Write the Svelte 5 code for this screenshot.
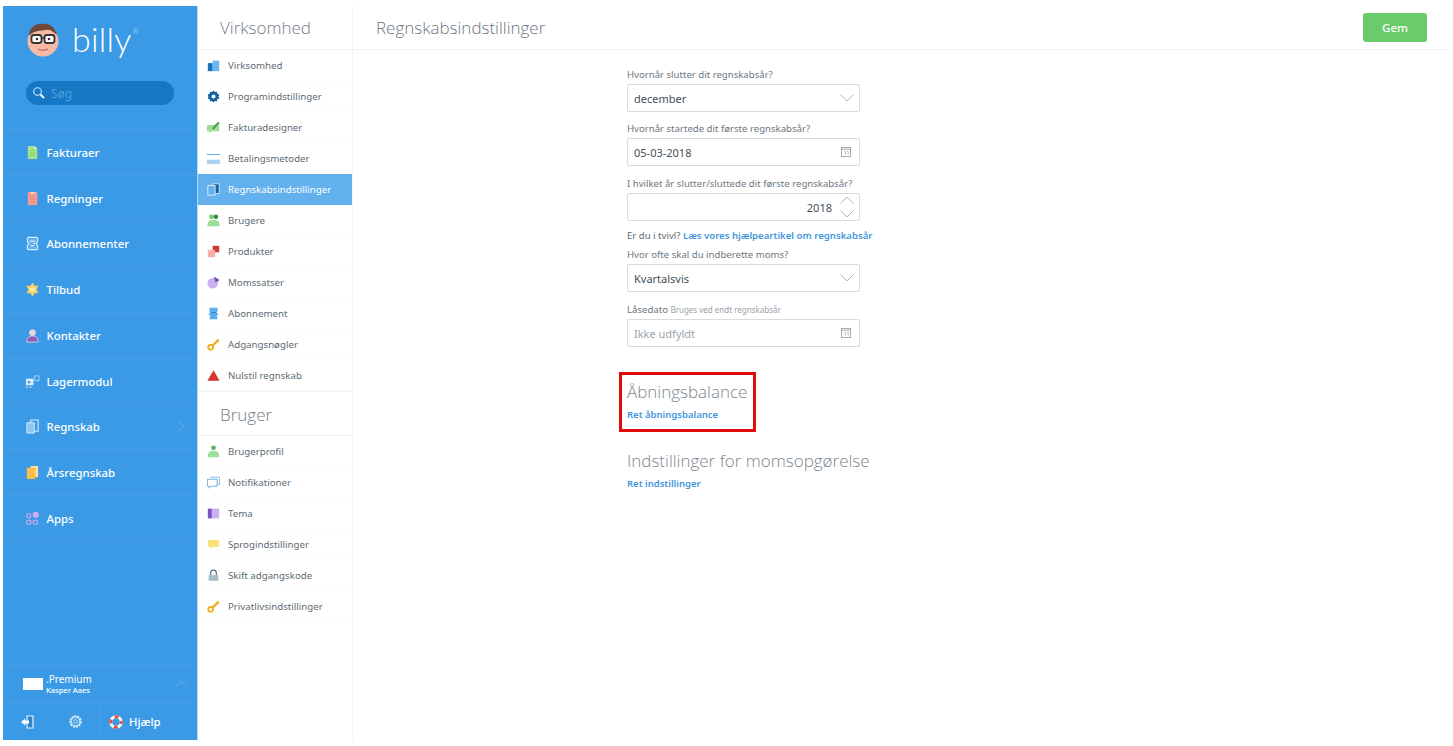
<script>
  const icons = {
    faktura: '<path d="M3 1h7l3 3v11H3z" fill="#a4e28c"/><path d="M10 1l3 3h-3z" fill="#e6f8dc"/><path d="M5 6h6M5 8.500h6M5 11h6" stroke="#86cf6c"/>',
    regning: '<path d="M3 1h10v14H3z" fill="#f59c90"/><path d="M6 1h4v2H6z" fill="#fbd5cf"/><path d="M5 6h6M5 9h6M5 12h6" stroke="#ec8376"/>',
    abon: '<path d="M3.500 1.500h9a1 1 0 011 1V6l-1.500 2 1.500 2v3.500a1 1 0 01-1 1h-9a1 1 0 01-1-1V10L4 8 2.500 6V2.500a1 1 0 011-1z" fill="#5fade9" stroke="#d9eefc" stroke-width="1.200"/><path d="M5 5.500h6M6 10.500h4M9 8h2" stroke="#fff"/>',
    tilbud: '<path d="M8 .5l2.200 3.500h4.300L12.300 8l2.200 4h-4.300L8 15.500 5.800 12H1.500l2.200-4-2.200-4h4.300z" fill="#f8d165"/><circle cx="8" cy="8" r="2.800" fill="#fbe7a6"/>',
    kontakt: '<path d="M4.500 5a3.500 3.500 0 017 0c0 2-1.500 3.500-3.500 3.500S4.500 7 4.500 5z" fill="#f3d6d8"/><path d="M2 15c0-5 2.500-6.500 6-6.500s6 1.500 6 6.500z" fill="#8e5bb5" stroke="#e9d9f3" stroke-width=".8"/>',
    lager: '<path d="M1 5h8v7H1z" fill="#d9edfb"/><path d="M10 2h5v5h-5z" fill="none" stroke="#a9d5f5"/><path d="M3 7.500h2.500V10H3z" fill="#3b99e4"/><path d="M1 14h2M5 14h2" stroke="#fff"/>',
    regnskab: '<path d="M6 1h8v12H6z" fill="none" stroke="#d4ebfb" stroke-width="1.200"/><path d="M2 4h8v11H2z" fill="#8cc6f2" stroke="#d4ebfb"/>',
    aars: '<path d="M6 1h8v12H6z" fill="#fbe19a"/><path d="M2 3h9v12H2z" fill="#f6bf4d"/>',
    apps: '<circle cx="4" cy="5" r="2.300" fill="none" stroke="#c9a7ea" stroke-width="1.200"/><circle cx="11.500" cy="4" r="3.300" fill="#cdaef0"/><circle cx="4" cy="12" r="2.300" fill="none" stroke="#c9a7ea" stroke-width="1.200"/><circle cx="11" cy="12" r="2.300" fill="none" stroke="#c9a7ea" stroke-width="1.200"/>',
    virk: '<path d="M1 5h6v10H1z" fill="#1f6fb5"/><path d="M7 2h8v13H7z" fill="#6cb5ee"/>',
    prog: '<path d="M8 .5l1.700 2 2.500-.5.500 2.500 2.500 1-1 2.500 1 2.500-2.500 1-.5 2.500-2.500-.5L8 15.500l-1.700-2-2.500.5-.5-2.500-2.500-1 1-2.500-1-2.500 2.500-1L3.800 2l2.500.5z" fill="#11649f"/><circle cx="8" cy="8" r="2.500" fill="#fff"/>',
    design: '<path d="M0 5h15v7.500H6L2.500 15v-2.500H0z" fill="#9ee08f"/><path d="M6 9l7.500-8 2 1.800-7.500 8z" fill="#4f9a55"/>',
    betal: '<path d="M0 2.500h16v11H0z" fill="#fff"/><path d="M0 3h16M0 13.500h16" stroke="#6aa9da" stroke-width="1.300"/><path d="M0 9.500h16v3.500H0z" fill="#a6d1f2"/>',
    regnw: '<path d="M7 1h8v12H7z" fill="#155f9f" stroke="#e6f3fd"/><path d="M1 3h9v12H1z" fill="#62b0ec" stroke="#e6f3fd" stroke-width="1.100"/>',
    brugere: '<circle cx="5.500" cy="3.500" r="3" fill="#74c874"/><circle cx="11" cy="3.500" r="2.800" fill="#2f8a43"/><path d="M.5 15c0-6 2-7.500 7.500-7.500s7.500 1.500 7.500 7.500z" fill="#98e098"/>',
    prod: '<path d="M7 1h8v8H7z" fill="#cf3b2f"/><path d="M1 6h9v9H1z" fill="#f8aea6"/>',
    moms: '<circle cx="7" cy="9" r="6.500" fill="#cbb0f2"/><path d="M8.500 .5l7 4.500-5 3z" fill="#6a4ca8"/>',
    abn: '<path d="M3 1h10v4l-1 2 2.500 2-2.500 1 1 5H3l1-5-2.500-1L4 7 3 5z" fill="#5aaef0"/><path d="M5 7h6" stroke="#1d72b8"/>',
    key: '<circle cx="4.500" cy="11.500" r="3" fill="none" stroke="#f1ac1c" stroke-width="2.200"/><path d="M6.500 9.500L14.500 2" stroke="#f1ac1c" stroke-width="2.800"/>',
    nul: '<path d="M8 1.500l7.500 13H.5z" fill="#d4372b"/>',
    profil: '<circle cx="8" cy="3.500" r="3" fill="#5cb860"/><path d="M1 15c0-6 2-7.500 7-7.500s7 1.500 7 7.500z" fill="#9ce09a"/>',
    noti: '<path d="M4 1.500h11.500v9H13" fill="none" stroke="#6aaee6"/><path d="M.5 4h12v8.500H5l-2.500 2.500v-2.500h-2z" fill="#fff" stroke="#4d9fe0"/>',
    tema: '<path d="M1 2h5v12H1z" fill="#7c52c9"/><path d="M6 2h9v12H6z" fill="#cbb0f2"/>',
    sprog: '<path d="M1 2.500h14v8.500H7l-3 2.500V11H1z" fill="#fbe07b"/>',
    lock: '<path d="M4.500 7.500V5a3.500 3.500 0 017 0v2.500" fill="none" stroke="#5d7282" stroke-width="1.500"/><path d="M2 7.500h12v7H2z" fill="#a6bcc9"/>'
  };

  const mainNav = [
    ['faktura', 'Fakturaer'], ['regning', 'Regninger'], ['abon', 'Abonnementer'],
    ['tilbud', 'Tilbud'], ['kontakt', 'Kontakter'], ['lager', 'Lagermodul'],
    ['regnskab', 'Regnskab', true], ['aars', 'Årsregnskab'], ['apps', 'Apps']
  ];
  const company = [
    ['virk', 'Virksomhed'], ['prog', 'Programindstillinger'], ['design', 'Fakturadesigner'],
    ['betal', 'Betalingsmetoder'], ['regnw', 'Regnskabsindstillinger'], ['brugere', 'Brugere'],
    ['prod', 'Produkter'], ['moms', 'Momssatser'], ['abn', 'Abonnement'],
    ['key', 'Adgangsnøgler'], ['nul', 'Nulstil regnskab']
  ];
  const user = [
    ['profil', 'Brugerprofil'], ['noti', 'Notifikationer'], ['tema', 'Tema'],
    ['sprog', 'Sprogindstillinger'], ['lock', 'Skift adgangskode'], ['key', 'Privatlivsindstillinger']
  ];
</script>

{#snippet icon(name, size)}
  <svg class="ico" width={size} height={size} viewBox="0 0 16 16">{@html icons[name]}</svg>
{/snippet}

{#snippet calendar()}
  <svg class="cal" width="10" height="10" viewBox="0 0 11 11">
    <rect x=".5" y=".5" width="10" height="10" fill="none" stroke="#9aa5ad" />
    <path d="M.5 2.500h10" stroke="#9aa5ad" />
    <path d="M3.500 5h1.500v3.500M6.500 5h1.500v3.500" fill="none" stroke="#b3bcc3" />
  </svg>
{/snippet}

{#snippet chevron()}
  <svg class="chev" width="14" height="8" viewBox="0 0 14 8"><path d="M.5 .5L7 7l6.500-6.500" fill="none" stroke="#a9b4bc" /></svg>
{/snippet}

<div class="page">
  <aside class="side">
    <div class="logo">
      <svg width="36" height="36" viewBox="0 0 36 36">
        <circle cx="18" cy="20" r="15.500" fill="#f7b9a6" />
        <path d="M4 15c0-9 8-13 14-12 3-1 11 0 14 11-5-4-7-6-11-5-6 1-12 0-17 6z" fill="#6f4a38" />
        <rect x="6.500" y="14" width="10" height="8" rx="2.500" fill="#fff" stroke="#333" stroke-width="1.800" />
        <rect x="19.500" y="14" width="10" height="8" rx="2.500" fill="#fff" stroke="#333" stroke-width="1.800" />
        <path d="M16 17h4" stroke="#333" stroke-width="1.500" />
        <circle cx="12" cy="18" r="1.300" fill="#333" />
        <circle cx="24" cy="18" r="1.300" fill="#333" />
        <path d="M13 28c3 1.500 7 1.500 10 0" fill="none" stroke="#a9604f" stroke-width="1.200" />
      </svg>
      <span class="word">billy</span><span class="reg">®</span>
    </div>
    <div class="search">
      <svg width="14" height="14" viewBox="0 0 14 14">
        <circle cx="5.500" cy="5.500" r="3.800" fill="none" stroke="#cfe6f8" stroke-width="1.100" />
        <path d="M8.500 8.500l3.500 3.500" stroke="#fff" stroke-width="1.800" />
      </svg>
      <span>Søg</span>
    </div>
    <nav class="mainnav">
      {#each mainNav as [ic, label, more]}
        <a class="mainrow">
          {@render icon(ic, 15)}
          <span>{label}</span>
          {#if more}
            <svg class="more" width="6" height="11" viewBox="0 0 6 11"><path d="M.5 .5l5 5-5 5" fill="none" stroke="#63aeea" /></svg>
          {/if}
        </a>
      {/each}
    </nav>
    <div class="foot">
      <div class="org">
        <span class="flag"></span>
        <div class="orgtext">
          <div class="plan">.Premium</div>
          <div class="who">Kasper Aaes</div>
        </div>
        <svg class="up" width="12" height="7" viewBox="0 0 12 7"><path d="M.5 6.500L6 1l5.500 5.500" fill="none" stroke="#63aeea" /></svg>
      </div>
      <div class="tools">
        <div class="tool t1">
          <svg width="14" height="14" viewBox="0 0 14 14">
            <path d="M7 1h6v12H7z" fill="#2f86cf" stroke="#e4f2fd" stroke-width="1.200" />
            <path d="M1 7l4-3.500v2h4v3H5v2z" fill="#fff" />
          </svg>
        </div>
        <div class="tool t2">
          <svg width="15" height="15" viewBox="0 0 16 16">
            <circle cx="8" cy="8" r="5.500" fill="none" stroke="#cfe6f8" stroke-width="2.400" stroke-dasharray="2.200 .8" />
            <circle cx="8" cy="8" r="4.600" fill="none" stroke="#cfe6f8" stroke-width="1" />
            <circle cx="8" cy="8" r="2" fill="none" stroke="#cfe6f8" />
          </svg>
        </div>
        <div class="tool t3">
          <svg width="14" height="14" viewBox="0 0 16 16">
            <circle cx="8" cy="8" r="6" fill="none" stroke="#fff" stroke-width="3.500" />
            <circle cx="8" cy="8" r="6" fill="none" stroke="#e2503f" stroke-width="3.500" stroke-dasharray="4.700 4.700" stroke-dashoffset="2.300" />
          </svg>
          <span>Hjælp</span>
        </div>
      </div>
    </div>
  </aside>

  <div class="sub">
    <h2 class="subhead">Virksomhed</h2>
    {#each company as [ic, label]}
      <a class="subrow" class:active={label === 'Regnskabsindstillinger'}>
        {@render icon(ic, 13)}
        <span>{label}</span>
      </a>
    {/each}
    <h2 class="subhead second">Bruger</h2>
    {#each user as [ic, label]}
      <a class="subrow">
        {@render icon(ic, 13)}
        <span>{label}</span>
      </a>
    {/each}
  </div>

  <main class="main">
    <header class="top">
      <h1>Regnskabsindstillinger</h1>
      <button class="save">Gem</button>
    </header>
    <div class="form">
      <label class="lbl first">Hvornår slutter dit regnskabsår?</label>
      <div class="field">december {@render chevron()}</div>
      <label class="lbl">Hvornår startede dit første regnskabsår?</label>
      <div class="field">05-03-2018 {@render calendar()}</div>
      <label class="lbl wide">I hvilket år slutter/sluttede dit første regnskabsår?</label>
      <div class="field year">
        <span class="num">2018</span>
        <span class="spin">
          <svg width="14" height="8" viewBox="0 0 14 8"><path d="M.5 7.500L7 1l6.500 6.500" fill="none" stroke="#a9b4bc" /></svg>
          <svg width="14" height="8" viewBox="0 0 14 8"><path d="M.5 .5L7 7l6.500-6.500" fill="none" stroke="#a9b4bc" /></svg>
        </span>
      </div>
      <p class="help">Er du i tvivl? <a>Læs vores hjælpeartikel om regnskabsår</a></p>
      <label class="lbl tight">Hvor ofte skal du indberette moms?</label>
      <div class="field">Kvartalsvis {@render chevron()}</div>
      <label class="lbl wide">Låsedato <small>Bruges ved endt regnskabsår</small></label>
      <div class="field empty">Ikke udfyldt {@render calendar()}</div>

      <section class="block one">
        <h3>Åbningsbalance</h3>
        <a>Ret åbningsbalance</a>
        <span class="mark"></span>
      </section>
      <section class="block two">
        <h3>Indstillinger for momsopgørelse</h3>
        <a>Ret indstillinger</a>
      </section>
    </div>
  </main>
</div>

<style>
  :global(body) { margin: 0; background: #fff; }
  .page {
    display: flex; height: 746px; box-sizing: border-box; padding: 6px 6px 6px 3px;
    font-family: "Noto Sans", "Open Sans", sans-serif; color: #5f6b75;
  }

  .side { width: 194px; flex: none; background: #3a9ae6; display: flex; flex-direction: column; color: #fff; }
  .logo { display: flex; align-items: center; height: 50px; padding: 15px 0 0 22px; box-sizing: border-box; }
  .word { font-family: Lato, sans-serif; font-weight: 300; font-size: 34px; margin-left: 11px; line-height: 36px; letter-spacing: .2px; }
  .reg { font-size: 7px; color: #8cc6f2; align-self: flex-start; margin-top: 6px; margin-left: 1px; }
  .search {
    display: flex; align-items: center; gap: 5px; height: 24px; margin: 25px 23px 0 23px; padding-left: 6px;
    background: #1478c4; border-radius: 12px; font-size: 12px; color: #4f9fdc;
  }
  .mainnav { margin-top: 24px; border-top: 1px solid #459fe8; }
  .mainrow {
    display: flex; align-items: center; gap: 7px; height: 45.75px; box-sizing: border-box; padding: 0 0 0 21.5px;
    border-bottom: 1px solid #459fe8; font-size: 11.4px; font-weight: 500; position: relative;
  }
  .ico { flex: none; }
  .more { margin-left: auto; margin-right: 13px; }

  .foot { margin-top: auto; }
  .org { display: flex; align-items: center; height: 37px; padding-left: 20px; border-top: 1px solid #459fe8; border-bottom: 1px solid #459fe8; }
  .flag { width: 20px; height: 12px; background: #fff; margin-right: 3px; }
  .plan { font-size: 10px; line-height: 12px; }
  .who { font-size: 7.5px; line-height: 10px; font-weight: 500; }
  .up { margin-left: auto; margin-right: 10px; }
  .tools { display: flex; height: 37px; }
  .tool { display: flex; align-items: center; justify-content: center; border-right: 1px solid #459fe8; }
  .t1 { width: 47px; }
  .t2 { width: 49px; }
  .t3 { border: 0; gap: 6px; padding-left: 8px; font-size: 11.3px; font-weight: 500; }

  .sub { width: 156px; flex: none; border-right: 1px solid #f2f4f5; border-left: 1px solid #a9dbfb; box-sizing: border-box; margin-right: 1px; }
  .subhead {
    margin: 0; height: 44px; box-sizing: border-box; padding: 11px 0 0 22px; border-bottom: 1px solid #f0f2f3;
    font-size: 17px; line-height: 22px; font-weight: 300; color: #727c85; font-family: "Open Sans", sans-serif;
  }
  .subhead.second { height: 45px; padding-top: 12px; border-top: 1px solid #f0f2f3; }
  .subrow {
    display: flex; align-items: center; gap: 8px; height: 31px; padding-left: 9px; box-sizing: border-box;
    font-size: 9.7px; color: #606b75; border-bottom: 1px solid #fafbfb;
  }
  .subrow.active { background: #62b0ec; color: #fff; border: 0; }

  .main { flex: 1; min-width: 0; }
  .top { display: flex; align-items: center; justify-content: space-between; height: 44px; box-sizing: border-box; padding: 0 20px 0 22px; border-bottom: 1px solid #eef0f1; }
  h1 { margin: 0; font-size: 17px; font-weight: 300; color: #6b757e; font-family: "Open Sans", sans-serif; }
  .save {
    width: 64px; height: 29px; background: #6acb6b; border: 0; border-radius: 3px; color: #fff;
    font: 500 11.5px "Noto Sans", sans-serif;
  }
  .form { width: 233px; margin-left: 273px; position: relative; }
  .lbl { display: block; font-size: 9.6px; line-height: 14px; color: #6d7882; margin: 10px 0 2px; white-space: nowrap; }
  .lbl.first { margin-top: 18px; }
  .lbl.wide { margin-top: 11px; }
  .lbl.tight { margin-top: 5px; }
  small { font-size: 8px; color: #98a2aa; }
  .field {
    display: flex; align-items: center; justify-content: space-between; height: 28px; box-sizing: border-box;
    padding: 0 5px 0 6px; border: 1px solid #d5dde2; border-radius: 2px; font-size: 11px; color: #44505a;
  }
  .field.empty { color: #9aa5ad; }
  .cal { margin-right: 3px; }
  .year { justify-content: flex-end; padding-right: 0; }
  .num { margin-right: 8px; }
  .spin { display: flex; flex-direction: column; gap: 6px; width: 19px; }
  .help { margin: 8px 0 0; font-size: 9.6px; line-height: 14px; color: #5f6b75; white-space: nowrap; }
  a { color: inherit; text-decoration: none; }
  .help a, .block a { color: #3f97dc; font-weight: 600; }
  .block { position: relative; }
  .block h3 { margin: 0; font-size: 17px; line-height: 24px; font-weight: 300; color: #7b858e; font-family: "Open Sans", sans-serif; white-space: nowrap; }
  .block a { display: block; font-size: 9.5px; line-height: 14px; margin-top: 4px; }
  .one { margin-top: 33px; }
  .two { margin-top: 27px; }
  .mark { position: absolute; left: -8px; top: -8px; width: 137px; height: 60px; box-sizing: border-box; border: 3px solid #e00b0b; }
</style>
